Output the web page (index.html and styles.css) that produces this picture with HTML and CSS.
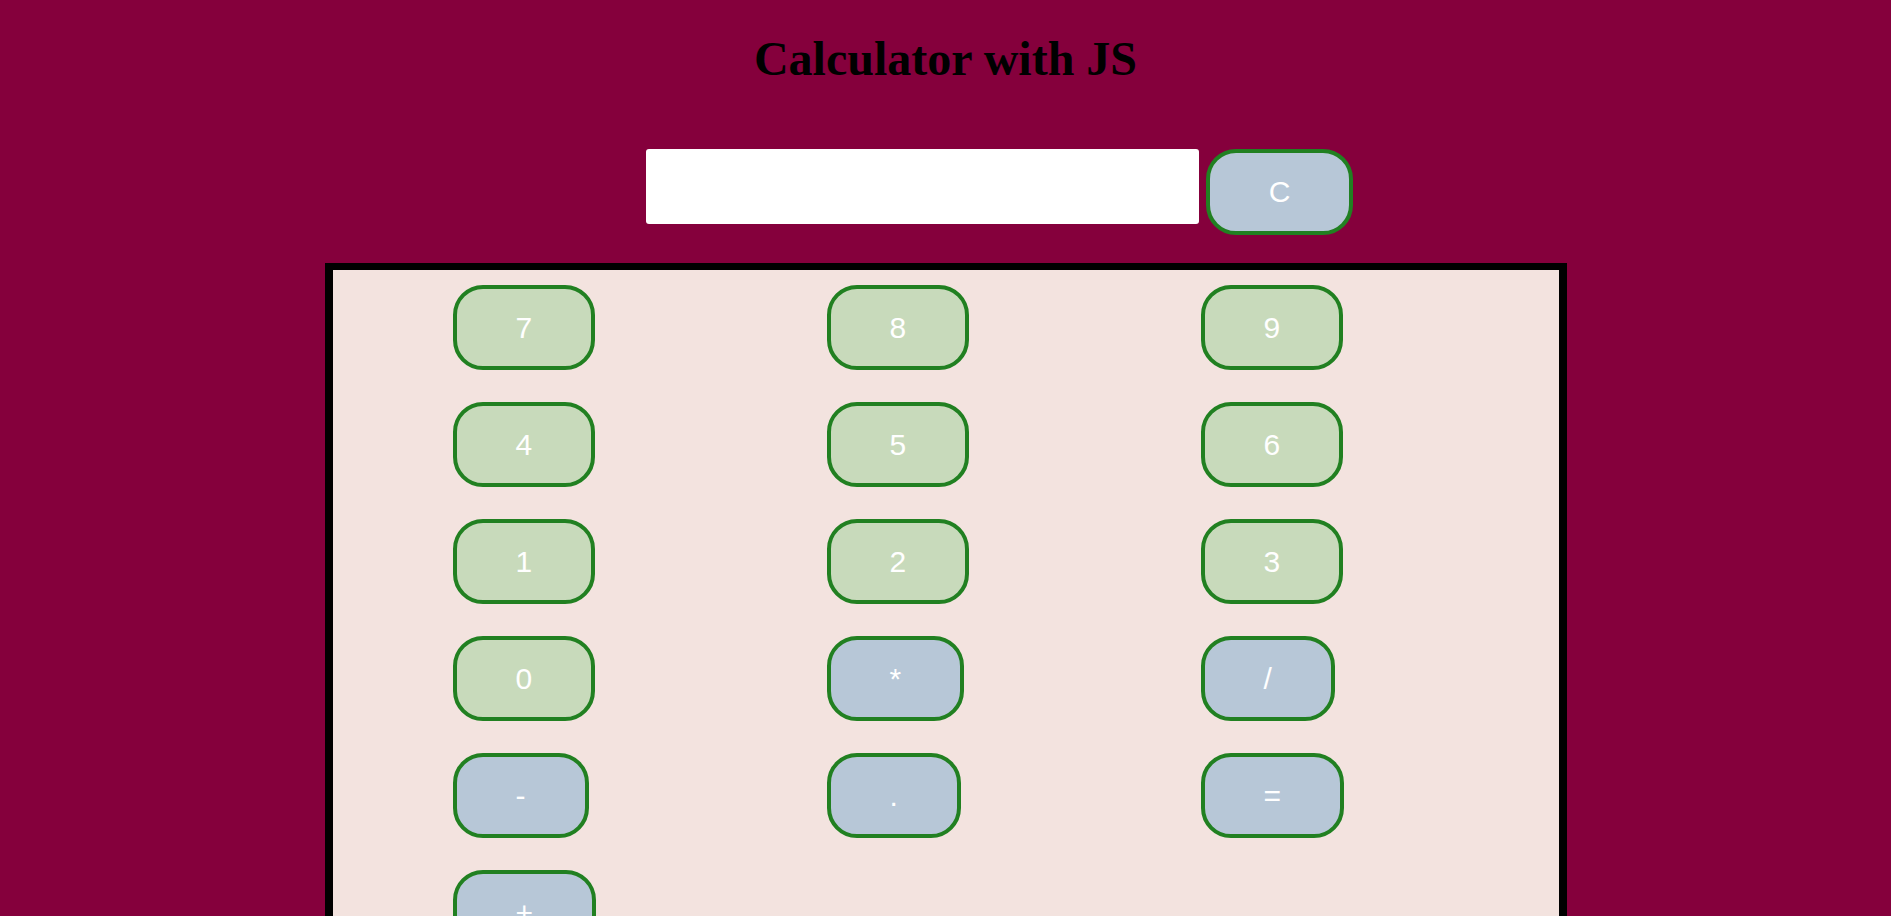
FILE: index.html
```html
<!DOCTYPE html>
<html lang="en">
<head>
<meta charset="utf-8">
<title>Calculator with JS</title>
<link rel="stylesheet" href="styles.css">
</head>
<body>
  <h1 class="title">Calculator with JS</h1>
  <div class="display-row">
    <input class="display" type="text">
    <button class="key key-op key-clear">C</button>
  </div>
  <div class="pad">
    <div class="keys">
      <button class="key key-num">7</button>
      <button class="key key-num">8</button>
      <button class="key key-num">9</button>
      <button class="key key-num">4</button>
      <button class="key key-num">5</button>
      <button class="key key-num">6</button>
      <button class="key key-num">1</button>
      <button class="key key-num">2</button>
      <button class="key key-num">3</button>
      <button class="key key-num">0</button>
      <button class="key key-op">*</button>
      <button class="key key-op">/</button>
      <button class="key key-op">-</button>
      <button class="key key-op">.</button>
      <button class="key key-op">=</button>
      <button class="key key-op">+</button>
    </div>
  </div>
</body>
</html>
```
FILE: styles.css
```css
html {
  overflow: hidden;
}
body {
  margin: 0;
  background: #85003c;
  font-family: "Liberation Sans", Arial, sans-serif;
}
.title {
  margin: 0;
  padding-top: 31px;
  font-family: "Liberation Serif", "Times New Roman", serif;
  font-size: 48px;
  line-height: 56px;
  font-weight: bold;
  color: #000;
  text-align: center;
}
.display-row {
  display: flex;
  align-items: flex-start;
  gap: 7px;
  margin-top: 62px;
  padding-left: 646px;
}
.display {
  width: 553px;
  height: 75px;
  box-sizing: border-box;
  border: none;
  border-radius: 3px;
  background: #fff;
  margin: 0;
}
.key {
  box-sizing: border-box;
  height: 85px;
  padding: 0 59px;
  border: 4px solid #218021;
  border-radius: 30px;
  font-family: "Liberation Sans", Arial, sans-serif;
  font-size: 30px;
  color: #fff;
  cursor: pointer;
}
.key-num {
  background: #c8dabb;
}
.key-op {
  background: #b7c7d7;
}
.key-clear {
  width: 147px;
  height: 86px;
  padding: 0;
}
.pad {
  margin: 28px auto 0;
  width: 1242px;
  height: 700px;
  box-sizing: border-box;
  border: 8px solid #000;
  border-top-width: 7px;
  background: #f3e3df;
  padding: 15px 0 0 120px;
}
.keys {
  display: grid;
  grid-template-columns: repeat(3, 374px);
  row-gap: 32px;
  justify-items: start;
}
```
